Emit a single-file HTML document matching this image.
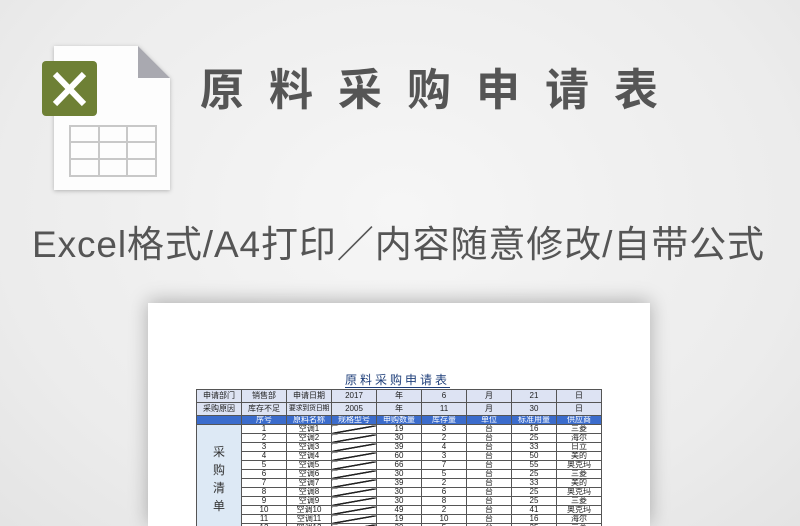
<!DOCTYPE html>
<html><head><meta charset="utf-8"><style>
*{margin:0;padding:0;box-sizing:border-box}
html,body{width:800px;height:526px;overflow:hidden}
body{background:radial-gradient(ellipse at 50% 40%,#f6f6f6 0%,#ececec 70%,#e4e4e4 100%);font-family:"Liberation Sans","Noto Sans CJK SC",sans-serif;position:relative}
.title{position:absolute;left:200px;top:54px;font-size:44px;font-weight:bold;color:#555;letter-spacing:25px;white-space:nowrap}
.sub{position:absolute;left:32px;top:214px;font-size:37px;color:#555;white-space:nowrap;letter-spacing:0.9px}
.paper{position:absolute;left:148px;top:303px;width:502px;height:223px;background:#fff;box-shadow:0 -2px 18px rgba(0,0,0,.28)}
.tt{position:absolute;left:345px;top:374px;font-size:12px;color:#1f3f7a;letter-spacing:3px;border-bottom:1px solid #1f3f7a;line-height:13px}
table{position:absolute;left:196px;top:389px;border-collapse:collapse;font-size:8px;color:#222;table-layout:fixed}
td{width:45px;border:1px solid #555;text-align:center;padding:0;line-height:8px;height:9px;white-space:nowrap;overflow:hidden}
.r1 td{height:13px;background:#dde3f3}
.hd td{background:#3b6ccc;color:#fff;height:8px}
.side{background:#dde9f5;font-size:12px;line-height:18px;color:#333;white-space:normal}
.sl{background:linear-gradient(170deg,transparent 44%,#222 46%,#222 54%,transparent 56%)}
.sm{font-size:7px;letter-spacing:-0.3px}
</style></head><body>
<svg style="position:absolute;left:0;top:0" width="200" height="200">
<defs><filter id="s"><feDropShadow dx="0" dy="1" stdDeviation="2" flood-opacity=".25"/></filter></defs>
<path d="M54 46 H138 L170 78 V190 H54 Z" fill="#fdfdfd" filter="url(#s)"/>
<path d="M138 46 L170 78 H138 Z" fill="#a9a9b0"/>
<rect x="42" y="61" width="55" height="55" rx="4" fill="#6e8035"/>
<path d="M55 74 L84 104 M84 74 L55 104" stroke="#fff" stroke-width="6"/>
<g fill="none" stroke="#c8c8c8" stroke-width="2">
<rect x="70" y="126" width="86" height="50"/>
<path d="M70 142 H156 M70 159 H156 M99 126 V176 M127 126 V176"/>
</g>
</svg>
<div class="title">原料采购申请表</div>
<div class="sub">Excel格式/A4打印／内容随意修改/自带公式</div>
<div class="paper"></div>
<div class="tt">原料采购申请表</div>
<table>
<tr class="r1"><td>申请部门</td><td>销售部</td><td>申请日期</td><td>2017</td><td>年</td><td>6</td><td>月</td><td>21</td><td>日</td></tr>
<tr class="r1"><td>采购原因</td><td>库存不足</td><td class="sm">要求到货日期</td><td>2005</td><td>年</td><td>11</td><td>月</td><td>30</td><td>日</td></tr>
<tr class="hd"><td></td><td>序号</td><td>原料名称</td><td>规格型号</td><td>申购数量</td><td>库存量</td><td>单位</td><td>标准用量</td><td>供应商</td></tr>
<tr><td class="side" rowspan="12">采<br>购<br>清<br>单</td><td>1</td><td>空调1</td><td class="sl"></td><td>19</td><td>3</td><td>台</td><td>16</td><td>三菱</td></tr>
<tr><td>2</td><td>空调2</td><td class="sl"></td><td>30</td><td>2</td><td>台</td><td>25</td><td>海尔</td></tr>
<tr><td>3</td><td>空调3</td><td class="sl"></td><td>39</td><td>4</td><td>台</td><td>33</td><td>日立</td></tr>
<tr><td>4</td><td>空调4</td><td class="sl"></td><td>60</td><td>3</td><td>台</td><td>50</td><td>美的</td></tr>
<tr><td>5</td><td>空调5</td><td class="sl"></td><td>66</td><td>7</td><td>台</td><td>55</td><td>奥克玛</td></tr>
<tr><td>6</td><td>空调6</td><td class="sl"></td><td>30</td><td>5</td><td>台</td><td>25</td><td>三菱</td></tr>
<tr><td>7</td><td>空调7</td><td class="sl"></td><td>39</td><td>2</td><td>台</td><td>33</td><td>美的</td></tr>
<tr><td>8</td><td>空调8</td><td class="sl"></td><td>30</td><td>6</td><td>台</td><td>25</td><td>奥克玛</td></tr>
<tr><td>9</td><td>空调9</td><td class="sl"></td><td>30</td><td>8</td><td>台</td><td>25</td><td>三菱</td></tr>
<tr><td>10</td><td>空调10</td><td class="sl"></td><td>49</td><td>2</td><td>台</td><td>41</td><td>奥克玛</td></tr>
<tr><td>11</td><td>空调11</td><td class="sl"></td><td>19</td><td>10</td><td>台</td><td>16</td><td>海尔</td></tr>
<tr><td>12</td><td>空调12</td><td class="sl"></td><td>30</td><td>5</td><td>台</td><td>25</td><td>三菱</td></tr>
</table>
</body></html>
